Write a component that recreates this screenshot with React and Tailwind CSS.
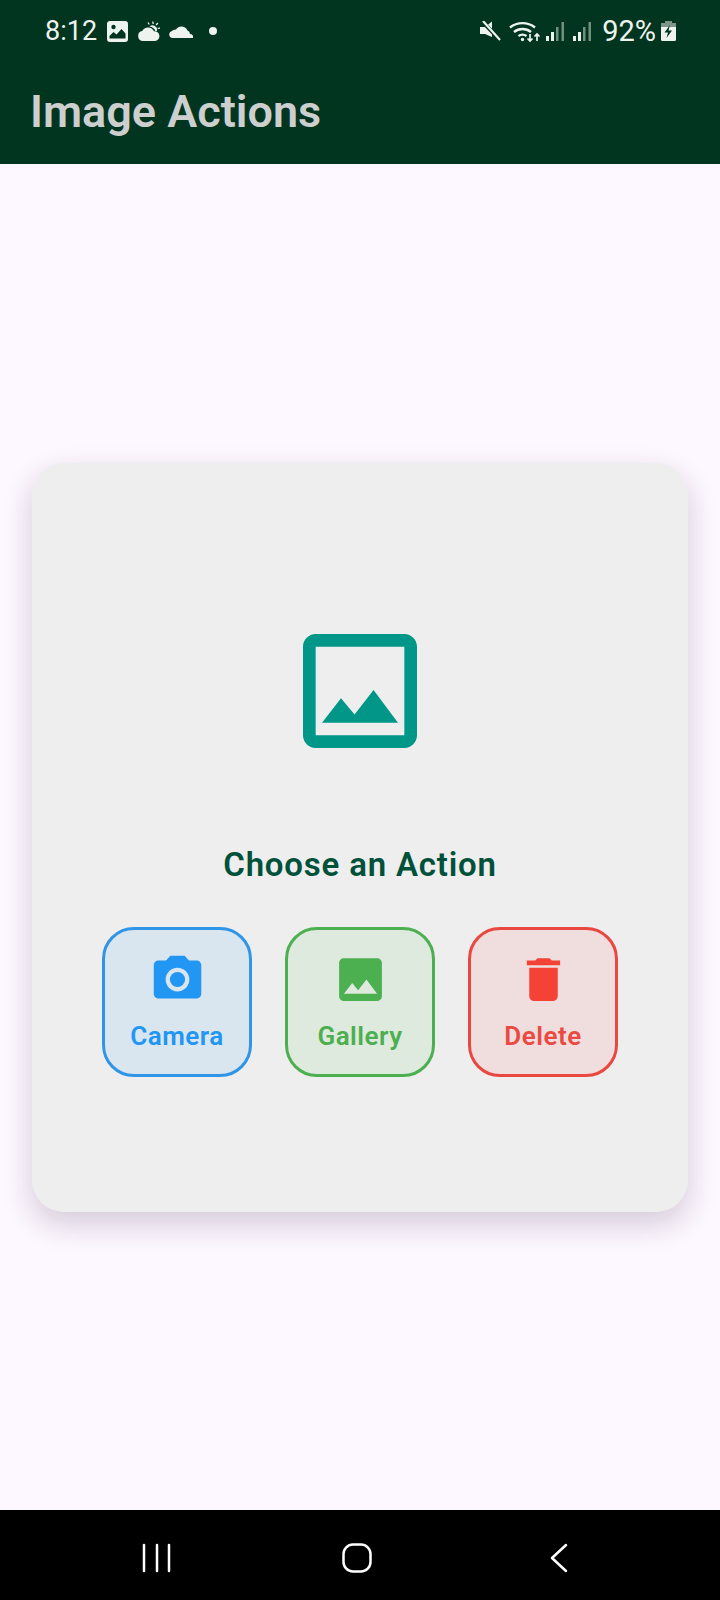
const roboto = 'font-[Roboto,"Liberation_Sans",sans-serif]';

function ImageOutline() {
  return (
    <svg width="152" height="152" viewBox="0 0 24 24" fill="#009688">
      <path d="M19 5v14H5V5h14m0-2H5c-1.1 0-2 .9-2 2v14c0 1.1.9 2 2 2h14c1.1 0 2-.9 2-2V5c0-1.1-.9-2-2-2zm-4.86 8.86l-3 3.87L9 13.14 6 17h12l-3.86-5.14z" />
    </svg>
  );
}

function CameraIcon({ color }) {
  return (
    <svg width="57" height="57" viewBox="0 0 24 24" fill={color}>
      <circle cx="12" cy="12" r="3.2" />
      <path d="M9 2L7.17 4H4c-1.1 0-2 .9-2 2v12c0 1.1.9 2 2 2h16c1.1 0 2-.9 2-2V6c0-1.1-.9-2-2-2h-3.17L15 2H9zm3 15c-2.76 0-5-2.24-5-5s2.24-5 5-5 5 2.24 5 5-2.24 5-5 5z" />
    </svg>
  );
}

function GalleryIcon({ color }) {
  return (
    <svg width="57" height="57" viewBox="0 0 24 24" fill={color}>
      <path d="M21 19V5c0-1.1-.9-2-2-2H5c-1.1 0-2 .9-2 2v14c0 1.1.9 2 2 2h14c1.1 0 2-.9 2-2zM8.5 13.5l2.5 3.01L14.5 12l4.5 6H5l3.5-4.5z" />
    </svg>
  );
}

function TrashIcon({ color }) {
  return (
    <svg width="57" height="57" viewBox="0 0 24 24" fill={color}>
      <path d="M6 19c0 1.1.9 2 2 2h8c1.1 0 2-.9 2-2V7H6v12zM19 4h-3.5l-1-1h-5l-1 1H5v2h14V4z" />
    </svg>
  );
}

function ActionButton({ label, color, tint, border, children }) {
  return (
    <div className={`flex h-[150px] w-[150px] flex-col items-center rounded-[32px] border-[3px] ${border} ${tint}`}>
      <div className="mt-[21px] h-[57px]">{children}</div>
      <span className={`mt-[13px] text-[26px] leading-[30px] font-semibold tracking-[0.5px] ${color}`}>{label}</span>
    </div>
  );
}

function StatusLeft() {
  return (
    <div className="flex items-center">
      <span className="ml-[45px] w-[52px] text-[27px] leading-[32px] text-[#eef3ef]">8:12</span>
      {/* picture */}
      <svg className="ml-[10px]" width="21" height="21" viewBox="0 0 21 21">
        <rect width="21" height="21" rx="3" fill="#eef3ef" />
        <path d="M2.500 17.500v-2.500l4-4 3 2.500 5-5.500 4 4.500v5z" fill="#01351f" />
        <circle cx="6.500" cy="6" r="2.200" fill="#01351f" />
      </svg>
      {/* weather */}
      <svg className="ml-[10px]" width="22" height="20" viewBox="0 0 22 20" fill="#eef3ef">
        <path d="M5 20a5 5 0 0 1-.8-9.900A6.500 6.500 0 0 1 16 10.200 4.900 4.900 0 0 1 17 20z" />
        <path d="M11.500 5.600a4.500 4.500 0 0 1 7.500 4.200l-1.500.4A7.500 7.500 0 0 0 11.500 5.600z" />
        <path d="M14.800.5l.4 2.500M19.800 2l-1.700 2M22 7.200l-2.300.2M10 1.500l1.300 2" stroke="#eef3ef" strokeWidth="1.300" />
      </svg>
      {/* cloud */}
      <svg className="ml-[9px]" width="24" height="14" viewBox="0 0 24 14" fill="#eef3ef">
        <path d="M3.500 14a3.500 3.500 0 0 1-.6-6.900A5 5 0 0 1 7 5.500 6.500 6.500 0 0 1 18.500 6.500 3.800 3.800 0 0 1 21 10a3 3 0 0 1 3 4z" />
      </svg>
      <span className="ml-[16px] h-[8px] w-[8px] rounded-full bg-[#eef3ef]" />
    </div>
  );
}

function StatusRight() {
  return (
    <div className="flex items-center">
      {/* muted */}
      <svg width="21" height="20" viewBox="0 0 21 20" fill="#eef3ef">
        <path d="M0 6h5l7-5.500V16L5 13H0z" />
        <path d="M2 0l18 19" stroke="#01351f" strokeWidth="4" />
        <path d="M3 0l17 19" stroke="#eef3ef" strokeWidth="2.200" />
      </svg>
      {/* wifi with arrows */}
      <svg className="ml-[8px]" width="32" height="22" viewBox="0 0 32 22" fill="none" stroke="#eef3ef" strokeWidth="2.400">
        <path d="M1 7.500a20 20 0 0 1 25 0" />
        <path d="M5 12a13.500 13.500 0 0 1 17 0" />
        <path d="M9.500 16a7 7 0 0 1 8 0" />
        <circle cx="13.500" cy="19.500" r="1.700" fill="#eef3ef" stroke="none" />
        <path d="M21 14v7M18.500 18.500l2.500 2.600 2.500-2.600M28 21v-7M25.500 16.500l2.500-2.600 2.500 2.600" strokeWidth="1.700" />
      </svg>
      <Signal className="ml-[5px]" />
      <Signal className="ml-[9px]" />
      <span className="ml-[11px] text-[29px] leading-[32px] text-[#eef3ef]">92%</span>
      {/* battery */}
      <svg className="ml-[5px] mr-[44px]" width="15" height="20" viewBox="0 0 15 20">
        <path d="M4 0h7v2H4z" fill="#7d9689" />
        <path d="M0 2h15v4H0z" fill="#7d9689" />
        <path d="M0 6h15v12.500a1.500 1.500 0 0 1-1.500 1.500h-12A1.500 1.500 0 0 1 0 18.500z" fill="#eef3ef" />
        <path d="M9 4L3.500 11.500H7L5.500 17 11 9.500H7.500z" fill="#01351f" />
      </svg>
    </div>
  );
}

function Signal({ className }) {
  return (
    <svg className={className} width="18" height="19" viewBox="0 0 18 19">
      <rect x="0" y="14" width="3" height="5" fill="#eef3ef" />
      <rect x="5" y="10" width="3" height="9" fill="#eef3ef" />
      <rect x="10" y="5" width="2.500" height="14" fill="#73907f" />
      <rect x="15.500" y="0" width="2.500" height="19" fill="#73907f" />
    </svg>
  );
}

export default function App() {
  return (
    <div className={`flex h-[1600px] w-[720px] flex-col bg-[#fdf7ff] ${roboto}`}>
      <header className="h-[164px] bg-[#01351f]">
        <div className="flex h-[62px] items-center justify-between">
          <StatusLeft />
          <StatusRight />
        </div>
        <h1 className="ml-[30px] mt-[20px] text-[45px] leading-[60px] font-semibold text-[#cdcfce]">Image Actions</h1>
      </header>

      <main className="flex flex-1 items-center justify-center">
        <div className="flex h-[749px] w-[656px] flex-col items-center rounded-[32px] bg-[#eeeeee] shadow-[0_12px_30px_rgba(50,25,60,0.2)]">
          <div className="mt-[152px]">
            <ImageOutline />
          </div>
          <h2 className="mt-[78px] text-[33px] leading-[40px] font-semibold tracking-[0.8px] text-[#00513a]">Choose an Action</h2>
          <div className="mt-[42px] flex gap-[33px]">
            <ActionButton label="Camera" color="text-[#2196f3]" tint="bg-[#d9e5ef]" border="border-[#2f95e6]">
              <CameraIcon color="#2196f3" />
            </ActionButton>
            <ActionButton label="Gallery" color="text-[#4caf50]" tint="bg-[#deeade]" border="border-[#4caf50]">
              <GalleryIcon color="#4caf50" />
            </ActionButton>
            <ActionButton label="Delete" color="text-[#ea4a42]" tint="bg-[#f0dddd]" border="border-[#e8483f]">
              <TrashIcon color="#f44336" />
            </ActionButton>
          </div>
        </div>
      </main>

      <nav className="flex h-[90px] items-center bg-black pt-[6px]">
        <svg className="ml-[142px]" width="30" height="30" viewBox="0 0 30 30" stroke="#fff" strokeWidth="2.500" strokeLinecap="round">
          <path d="M2 2v26M15 2v26M27 2v26" />
        </svg>
        <svg className="ml-[170px]" width="30" height="30" viewBox="0 0 30 30" fill="none" stroke="#fff" strokeWidth="2.500">
          <rect x="1.500" y="1.500" width="27" height="27" rx="9.500" />
        </svg>
        <svg className="ml-[178px]" width="18" height="30" viewBox="0 0 18 30" fill="none" stroke="#fff" strokeWidth="2.500" strokeLinecap="round" strokeLinejoin="round">
          <path d="M16 2L2 15l14 13" />
        </svg>
      </nav>
    </div>
  );
}
